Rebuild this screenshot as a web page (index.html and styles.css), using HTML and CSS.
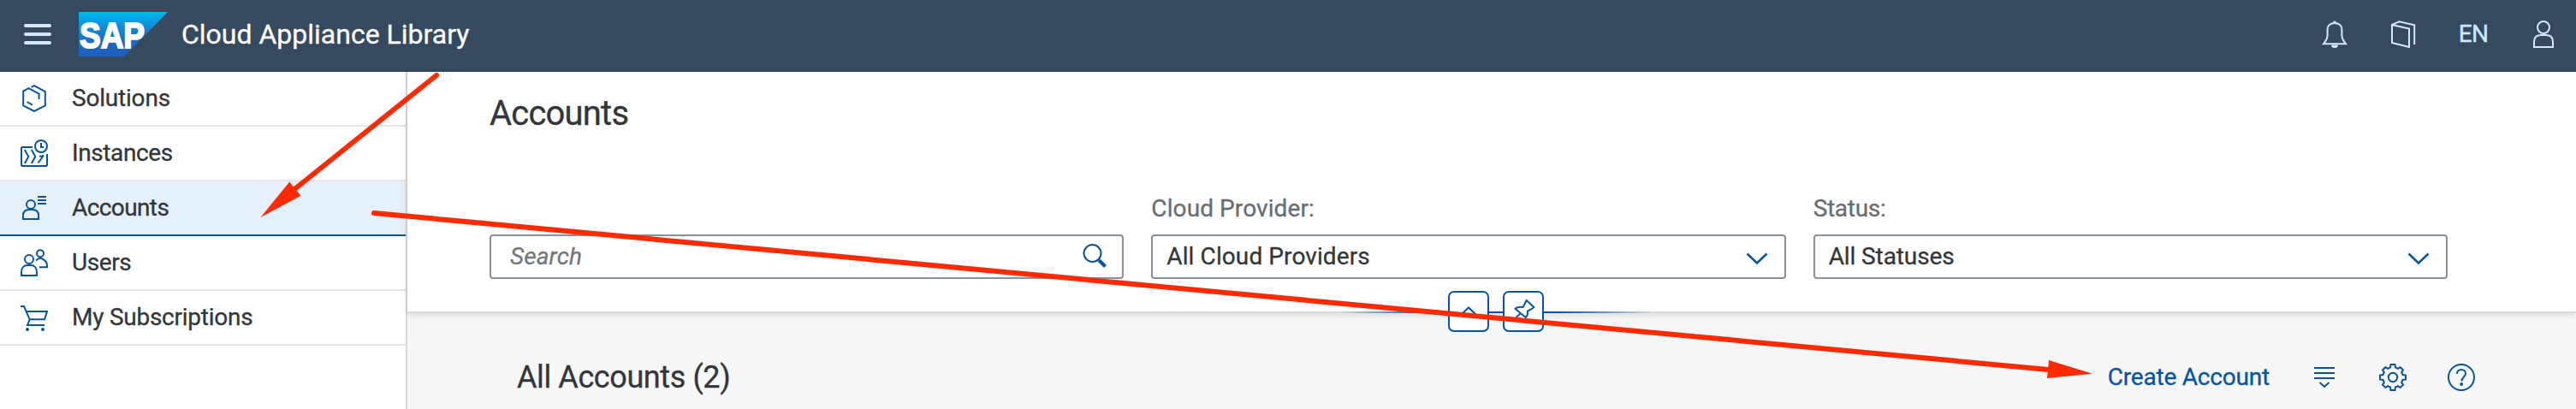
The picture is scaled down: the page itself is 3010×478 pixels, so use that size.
FILE: index.html
```html
<!DOCTYPE html>
<html lang="en">
<head>
<meta charset="utf-8">
<title>Cloud Appliance Library</title>
<link rel="stylesheet" href="styles.css">
</head>
<body>
<header class="shell">
  <svg class="menu" viewBox="0 0 32 24"><path d="M2 2H30M2 12H30M2 22H30"/></svg>
  <svg class="logo" viewBox="0 0 104 52">
    <defs><linearGradient id="sap" x1="0" y1="0" x2="0" y2="1"><stop offset="0" stop-color="#00b8f1"/><stop offset=".3" stop-color="#0d90d9"/><stop offset=".65" stop-color="#1a6bc4"/><stop offset="1" stop-color="#1f5fbb"/></linearGradient></defs>
    <path d="M0 0H104L53 52H0Z" fill="url(#sap)"/>
    <text class="logo-text" x="1" y="41.500" textLength="76" lengthAdjust="spacingAndGlyphs">SAP</text>
  </svg>
  <span class="product">Cloud Appliance Library</span>
  <div class="shell-actions">
    <svg class="icon" viewBox="0 0 32 32"><path d="M3 27.2C5 24.5 7.600 22 7.600 17V10.500C7.600 6 11 3 16 3s8.400 3 8.400 7.500V17c0 5 2.600 7.500 4.600 10.200Z"/><path class="solid" d="M12 28.500h8a4 3.500 0 0 1-8 0ZM14 2.500a2 2 0 0 1 4 0Z"/></svg>
    <svg class="icon" viewBox="0 0 32 32"><path d="M3 5L23 9.500V31L3 26ZM3 5L11.500 1.200L29.200 5.200V28"/></svg>
    <span class="lang">EN</span>
    <svg class="icon" viewBox="0 0 32 32"><circle cx="16" cy="8" r="7"/><path d="M5 31V25c0-5 3-8 8-8h6c5 0 8 3 8 8v6Z"/></svg>
  </div>
</header>
<div class="body">
  <nav class="side">
    <a class="item"><svg class="icon" viewBox="0 0 32 32"><path d="M12.500 2.800L16 1.200L28.800 8V24.500L16 31L3.200 24.500V7.500L9.500 4.200L21.500 10.500V17M7.500 20L14 23.700"/></svg><span class="t-solutions">Solutions</span></a>
    <a class="item"><svg class="icon" viewBox="0 0 32 32"><path d="M14 9H2L1 10V30L2 31H30L31 30V17"/><circle cx="24" cy="8" r="7"/><path d="M24 4V9H27M4.800 12L9.300 20L4.800 28M12.800 12L17.300 20L12.800 28M20.500 27.500L26 20L22 19.500M26 20V18"/></svg><span class="t-instances">Instances</span></a>
    <a class="item selected"><svg class="icon" viewBox="0 0 32 32"><circle cx="12" cy="12" r="5"/><path d="M3 29V25c0-5 3-7 7-7h4c4 0 7 2 7 7v4ZM20 3H30M20 7H30M20 11H30"/></svg><span class="t-accounts">Accounts</span></a>
    <a class="item"><svg class="icon" viewBox="0 0 32 32"><circle cx="10" cy="12" r="5"/><path d="M1 31V27c0-5 3-8 7-8h4c4 0 7 3 7 8v4ZM18 13.500L20.500 11.500Q23 10 25.500 11.500Q31 14.500 31 19V21.200H22"/><circle cx="23" cy="5.200" r="4"/></svg><span class="t-users">Users</span></a>
    <a class="item"><svg class="icon" viewBox="0 0 32 32"><path d="M0 3H4L10.700 18.300H28L31 9H7M10.700 18.300L8 25H28"/><circle class="solid" cx="8" cy="30" r="2"/><circle class="solid" cx="26" cy="30" r="2"/></svg><span class="t-subs">My Subscriptions</span></a>
  </nav>
  <main class="main">
    <section class="filters">
      <h1 class="title">Accounts</h1>
      <div class="fields">
        <div class="field"><span class="label"></span><div class="box search"><span class="placeholder">Search</span><svg class="search-icon" viewBox="0 0 28 28"><circle cx="11.500" cy="11" r="10"/><path class="handle" d="M19 19L26.500 26.500"/></svg></div></div>
        <div class="field"><span class="label t-provider">Cloud Provider:</span><div class="box"><span class="t-allp">All Cloud Providers</span><svg class="chevron" viewBox="0 0 26 14"><path d="M1.500 1.500L13 12.500L24.500 1.500"/></svg></div></div>
        <div class="field"><span class="label t-status">Status:</span><div class="box"><span class="t-alls">All Statuses</span><svg class="chevron" viewBox="0 0 26 14"><path d="M1.500 1.500L13 12.500L24.500 1.500"/></svg></div></div>
      </div>
      <div class="snap">
        <button class="snap-btn"><svg viewBox="0 0 44 44"><path d="M11 28L22 17.500L33 28"/></svg></button>
        <button class="snap-btn"><svg viewBox="2 2 44 44"><path d="M27.700 11L36.300 18.900L34 21L29 23.500Q29.500 29 26.700 31L14.500 20.700Q17 18.300 23.500 19ZM21 26L15.500 31"/></svg></button>
      </div>
    </section>
    <section class="toolbar">
      <h2 class="table-title">All Accounts (2)</h2>
      <a class="create">Create Account</a>
      <svg class="icon" viewBox="0 0 32 32"><path d="M4 5H28M4 11H28M4 17H28M10.500 22L16 27L21.500 22"/></svg>
      <svg class="icon" viewBox="-16 -16 32 32"><path d="M-3-11.500L-2.500-15H2.500L3-11.500L6-10.200L8.600-12L12-8.600L10.200-6L11.500-3L15-2.500V2.500L11.500 3L10.200 6L12 8.600L8.600 12L6 10.200L3 11.500L2.500 15H-2.500L-3 11.500L-6 10.200L-8.600 12L-12 8.600L-10.200 6L-11.500 3L-15 2.500V-2.500L-11.500-3L-10.200-6L-12-8.600L-8.600-12L-6-10.200Z"/><circle r="5.200"/></svg>
      <svg class="icon" viewBox="0 0 32 32"><circle cx="16" cy="16" r="15"/><path d="M11 12c0-3 2-5 5-5s5 2 5 4.600c0 4-4.500 4-4.500 8.900"/><circle class="solid" cx="16.200" cy="24" r="1.900"/></svg>
    </section>
  </main>
</div>
<svg class="arrows" viewBox="0 0 3010 478">
  <path class="shaft" d="M510 88L343 222M437 249L2396 432.200"/>
  <path class="head" d="M304.500 254L338.300 212.500L345 221L351.500 228.700ZM2445 436.700L2394 421L2392 442Z"/>
</svg>
</body>
</html>
```
FILE: styles.css
```css
* { box-sizing: border-box; }
body { margin: 0; width: 3010px; height: 478px; overflow: hidden; background: #fff; color: #32363a; font-family: Roboto, "Liberation Sans", sans-serif; font-size: 28px; line-height: 36px; -webkit-text-stroke: 0.3px; }
svg { display: block; flex: none; fill: none; stroke: currentColor; stroke-width: 2; }
span, a, h1, h2 { white-space: nowrap; }
.icon { width: 32px; height: 32px; }
.solid { fill: currentColor; stroke: none; }

.shell { display: flex; align-items: center; height: 84px; padding: 0 22px 4px 28px; background: #354a5f; color: #d1e8ff; }
.menu { width: 32px; height: 24px; stroke-width: 4; stroke-linecap: round; }
.logo { width: 104px; height: 52px; margin-left: 32px; stroke: none; }
.logo-text { fill: #fff; stroke: #fff; stroke-width: 2px; font: bold 43px "Liberation Sans", sans-serif; }
.product { margin: 0 auto 0 16px; color: #fff; font-size: 32px; letter-spacing: 0; }
.shell-actions { display: flex; align-items: center; gap: 48px; }
.lang { width: 36px; text-align: center; letter-spacing: -0.6px; }

.body { display: flex; height: 394px; }
.side { width: 476px; border-right: 2px solid #d9d9d9; color: #0854a0; }
.item { display: flex; align-items: center; gap: 28px; height: 64px; padding-left: 24px; border-bottom: 2px solid #e5e5e5; }
.item span { color: #32363a; }
.item.selected { background: #e5f0fa; border-bottom-color: #0854a0; }
.t-solutions { letter-spacing: -0.2px; }
.t-instances { letter-spacing: -0.4px; }
.t-accounts { letter-spacing: -0.6px; }
.t-users { letter-spacing: -0.4px; }
.t-subs { letter-spacing: -0.25px; }

.main { flex: 1; display: flex; flex-direction: column; background: #f7f7f7; }
.filters { position: relative; height: 282px; padding: 25px 150px 0 96px; background: #fff; border-bottom: 2px solid #d9d9d9; box-shadow: 0 2px 8px rgba(0,0,0,.12); }
.title { margin: 0; font-size: 40px; font-weight: 400; line-height: 48px; letter-spacing: -0.8px; }
.fields { display: grid; grid-template-columns: repeat(3, 1fr); gap: 32px; padding-top: 69px; }
.field { display: flex; flex-direction: column; gap: 12px; }
.label { height: 36px; color: #6a6d70; }
.t-provider { letter-spacing: 0.1px; }
.t-status { letter-spacing: -0.3px; }
.t-allp { letter-spacing: 0.1px; }
.t-alls { letter-spacing: -0.1px; }
.box { display: flex; align-items: center; justify-content: space-between; height: 52px; padding: 0 19px 0 16px; border: 2px solid #89919a; border-radius: 4px; }
.search { padding-left: 22px; padding-right: 18px; }
.placeholder { color: #74777a; font-style: italic; letter-spacing: 0.1px; }
.search-icon { width: 28px; height: 28px; margin-bottom: 3px; color: #0854a0; }
.handle { stroke-width: 4; }
.chevron { width: 26px; height: 14px; margin-top: 3px; color: #0854a0; stroke-width: 2.500; }
.snap { position: absolute; left: 1088px; top: 256px; display: flex; justify-content: center; gap: 16px; width: 368px; background: linear-gradient(90deg, transparent, #0854a0 30%, #0854a0 70%, transparent) 0 24px / 100% 2px no-repeat; }
.snap-btn { width: 48px; height: 48px; padding: 0; border: 2px solid #0854a0; border-radius: 7px; background: #fff; color: #0854a0; }

.toolbar { display: flex; align-items: center; gap: 48px; height: 110px; padding: 40px 118px 0 128px; color: #0854a0; }
.table-title { margin: 0 auto 0 0; color: #32363a; font-size: 36px; font-weight: 400; line-height: 44px; letter-spacing: -0.4px; }
.create { letter-spacing: -0.2px; }

.arrows { position: absolute; left: 0; top: 0; width: 3010px; height: 478px; pointer-events: none; }
.shaft { stroke: #ff2a00; stroke-width: 6; stroke-linecap: round; }
.head { fill: #ff2a00; stroke: none; }
```
